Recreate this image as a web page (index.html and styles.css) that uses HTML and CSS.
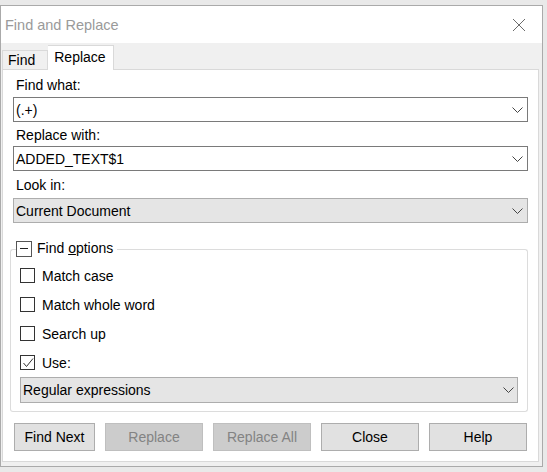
FILE: index.html
```html
<!DOCTYPE html>
<html lang="en">
<head>
    <meta charset="UTF-8">
    <title>Find and Replace</title>
    <link rel="stylesheet" href="styles.css">
</head>
<body>
    <div class="window">
        <div class="titlebar">
            <span class="title">Find and Replace</span>
            <svg class="close-icon" width="14" height="14" viewBox="0 0 14 14">
                <path d="M1 1 L13 13 M13 1 L1 13" stroke="#6b6b6b" stroke-width="1" fill="none"/>
            </svg>
        </div>

        <div class="tabs">
            <div class="tab">Find</div>
            <div class="tab active">Replace</div>
        </div>

        <div class="panel">
            <!-- Search fields -->
            <div class="label">Find what:</div>
            <div class="combo combo-edit first">
                <span>(.+)</span>
                <svg class="chevron" width="11" height="6" viewBox="0 0 11 6"><polyline points="0.5,0.5 5.5,5.5 10.5,0.5" stroke="#444" fill="none"/></svg>
            </div>

            <div class="label label-2">Replace with:</div>
            <div class="combo combo-edit second">
                <span>ADDED_TEXT$1</span>
                <svg class="chevron" width="11" height="6" viewBox="0 0 11 6"><polyline points="0.5,0.5 5.5,5.5 10.5,0.5" stroke="#444" fill="none"/></svg>
            </div>

            <div class="label label-3">Look in:</div>
            <div class="combo combo-list third">
                <span>Current Document</span>
                <svg class="chevron" width="11" height="6" viewBox="0 0 11 6"><polyline points="0.5,0.5 5.5,5.5 10.5,0.5" stroke="#444" fill="none"/></svg>
            </div>

            <!-- Find options group -->
            <div class="options">
                <div class="options-head">
                    <span class="edge edge-left"></span>
                    <span class="toggle-box"><span class="minus"></span></span>
                    <span class="options-title">Find <u>o</u>ptions</span>
                    <span class="edge edge-right"></span>
                </div>
                <div class="options-body">
                    <div class="check-row"><span class="checkbox"></span>Match case</div>
                    <div class="check-row"><span class="checkbox"></span>Match whole word</div>
                    <div class="check-row"><span class="checkbox"></span>Search up</div>
                    <div class="check-row">
                        <span class="checkbox">
                            <svg width="12" height="12" viewBox="0 0 12 12"><polyline points="1.5,6 4.5,9.5 11,1.5" stroke="#333" stroke-width="1" fill="none"/></svg>
                        </span>Use:
                    </div>
                    <div class="combo combo-list regex">
                        <span>Regular expressions</span>
                        <svg class="chevron" width="11" height="6" viewBox="0 0 11 6"><polyline points="0.5,0.5 5.5,5.5 10.5,0.5" stroke="#444" fill="none"/></svg>
                    </div>
                </div>
            </div>

            <!-- Buttons -->
            <div class="buttons">
                <button class="btn btn-small">Find Next</button>
                <button class="btn" disabled>Replace</button>
                <button class="btn" disabled>Replace All</button>
                <button class="btn">Close</button>
                <button class="btn">Help</button>
            </div>
        </div>
    </div>
</body>
</html>
```

FILE: styles.css
```css
body {
    margin: 0;
    background: #e9e9e9;
    font-family: "Liberation Sans", Arial, sans-serif;
    font-size: 14px;
    color: #000;
}

.window {
    width: 541px;
    height: 460px;
    margin-top: 5px;
    border: 1px solid #aaaaaa;
    background: #f0f0f0;
    display: flex;
    flex-direction: column;
}

.titlebar {
    height: 37px;
    background: #fff;
    display: flex;
    align-items: center;
    justify-content: space-between;
    padding: 0 16px 0 4px;
}

.title {
    color: #9a9a9a;
    font-size: 14.5px;
    margin-top: 1px;
}

.tabs {
    height: 26px;
    display: flex;
    align-items: flex-end;
    padding-left: 1px;
}

.tab {
    height: 18px;
    line-height: 18px;
    padding: 0 12px 0 5px;
    border: 1px solid #d9d9d9;
    border-bottom: none;
    background: #f0f0f0;
}

.tab.active {
    height: 24px;
    line-height: 22px;
    padding: 0 7px 0 6px;
    background: #fff;
    border-left: none;
    margin-bottom: -1px;
    position: relative;
}

.panel {
    margin-left: 1px;
    width: 515px;
    height: 385px;
    border: 1px solid #d9d9d9;
    background: #fff;
    padding: 6px 10px 0 10px;
}

.label {
    height: 18px;
    line-height: 18px;
    padding-left: 3px;
}

.label-2 {
    margin-top: 4px;
}

.label-3 {
    margin-top: 5px;
}

.combo {
    height: 25px;
    box-sizing: border-box;
    display: flex;
    align-items: center;
    justify-content: space-between;
    padding: 0 4px 0 2px;
}

.combo-edit {
    border: 1px solid #7a7a7a;
    background: #fff;
}

.combo-list {
    border: 1px solid #adadad;
    background: #e5e5e5;
}

.first {
    margin-top: 3px;
}

.second {
    margin-top: 2px;
}

.third {
    margin-top: 4px;
}

.chevron {
    display: block;
}

.options {
    margin-top: 17px;
    margin-left: -3px;
}

.options-head {
    height: 17px;
    display: flex;
    align-items: center;
}

.edge {
    align-self: flex-end;
    height: 8px;
    box-sizing: border-box;
    border-top: 1px solid #dcdcdc;
}

.edge-left {
    width: 6px;
    border-left: 1px solid #dcdcdc;
    border-top-left-radius: 3px;
}

.edge-right {
    flex: 1;
    margin-left: 4px;
    border-right: 1px solid #dcdcdc;
    border-top-right-radius: 3px;
}

.toggle-box {
    width: 16px;
    height: 16px;
    box-sizing: border-box;
    border: 1px solid #555;
    display: flex;
    align-items: center;
    justify-content: center;
}

.minus {
    width: 8px;
    height: 1px;
    background: #222;
}

.options-title {
    margin-left: 5px;
    line-height: 17px;
}

.options-body {
    border: 1px solid #dcdcdc;
    border-top: none;
    border-radius: 0 0 3px 3px;
    padding: 4px 9px 8px 9px;
}

.check-row {
    height: 29px;
    display: flex;
    align-items: center;
}

.checkbox {
    width: 15px;
    height: 15px;
    box-sizing: border-box;
    border: 1px solid #333;
    margin-right: 7px;
    display: flex;
    align-items: center;
    justify-content: center;
    background: #fff;
}

.regex {
    height: 26px;
    padding-right: 3px;
}

.buttons {
    margin-top: 11px;
    padding-left: 1px;
    display: flex;
    gap: 10px;
}

.btn {
    width: 98px;
    height: 28px;
    border: 1px solid #adadad;
    background: #e1e1e1;
    font-family: "Liberation Sans", Arial, sans-serif;
    font-size: 14px;
    color: #000;
    padding: 0;
}

.btn-small {
    width: 81px;
}

.btn:disabled {
    background: #cccccc;
    border-color: #bfbfbf;
    color: #838383;
}
```
